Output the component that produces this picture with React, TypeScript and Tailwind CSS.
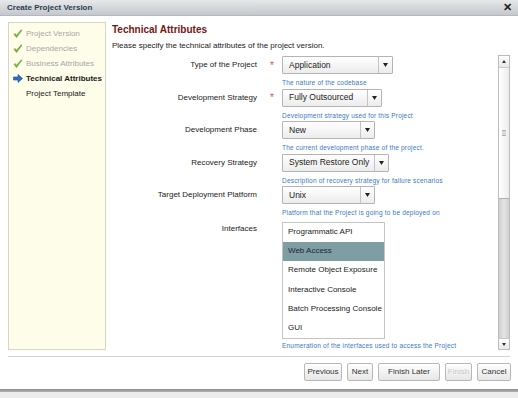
import React from "react";

const Check = () => (
    <svg width="10" height="10" viewBox="0 0 10 10" className="shrink-0">
        <path d="M1 5.5 L3.6 8.6 L9 1.2 L8.2 0.8 L3.5 6.2 L2 4.4 Z" fill="#7cb342" stroke="#5a9a2a" strokeWidth="0.5" />
    </svg>
);

const ArrowIcon = () => (
    <svg width="10" height="9" viewBox="0 0 10 9" className="shrink-0">
        <path d="M0.5 3 H5 V0.5 L9.5 4.5 L5 8.5 V6 H0.5 Z" fill="#2f6fc4" stroke="#1b4f96" strokeWidth="0.6" />
    </svg>
);

interface Step {
    label: string;
    state: "done" | "current" | "todo";
}

const steps: Step[] = [
    { label: "Project Version", state: "done" },
    { label: "Dependencies", state: "done" },
    { label: "Business Attributes", state: "done" },
    { label: "Technical Attributes", state: "current" },
    { label: "Project Template", state: "todo" },
];

interface Field {
    label: string;
    value: string;
    width: string;
    help: string;
    required?: boolean;
}

const fields: Field[] = [
    { label: "Type of the Project", value: "Application", width: "w-[111px]", help: "The nature of the codebase", required: true },
    { label: "Development Strategy", value: "Fully Outsourced", width: "w-[100px]", help: "Development strategy used for this Project", required: true },
    { label: "Development Phase", value: "New", width: "w-[93px]", help: "The current development phase of the project." },
    { label: "Recovery Strategy", value: "System Restore Only", width: "w-[107px]", help: "Description of recovery strategy for failure scenarios" },
    { label: "Target Deployment Platform", value: "Unix", width: "w-[93px]", help: "Platform that the Project is going to be deployed on" },
];

const interfaces = ["Programmatic API", "Web Access", "Remote Object Exposure", "Interactive Console", "Batch Processing Console", "GUI"];

const Select = ({ value, width }: { value: string; width: string }) => (
    <div className={`${width} h-[18px] flex border border-[#b4b4b4] bg-gradient-to-b from-white to-[#ececec] rounded-[1px]`}>
        <div className="flex-1 flex items-center pl-[6px] text-[8.5px] text-[#222] whitespace-nowrap">{value}</div>
        <div className="w-[14px] border-l border-[#c4c4c4] flex items-center justify-center">
            <svg width="5" height="4" viewBox="0 0 5 4"><path d="M0 0 H5 L2.5 4 Z" fill="#222" /></svg>
        </div>
    </div>
);

const Button = ({ label, width, disabled }: { label: string; width: string; disabled?: boolean }) => (
    <button className={`${width} h-[18px] px-0 border border-[#b8b8b8] rounded-[2px] bg-gradient-to-b from-white to-[#e6e6e6] text-[8px] whitespace-nowrap ${disabled ? "text-[#c8c8c8]" : "text-[#333]"}`}>
        {label}
    </button>
);

const Scrollbar = () => (
    <div className="w-[12px] shrink-0 flex flex-col border border-[#bcbcbc] bg-[#f2f2f2]">
        <div className="h-[12px] flex items-center justify-center border-b border-[#c8c8c8] bg-gradient-to-b from-white to-[#e8e8e8]">
            <svg width="4" height="3" viewBox="0 0 4 3"><path d="M0 3 H4 L2 0 Z" fill="#333" /></svg>
        </div>
        <div className="h-[131px] flex items-center justify-center border-b border-[#b0b0b0] bg-gradient-to-r from-white to-[#ececec]">
            <div className="w-[4px] h-[6px] border-y border-[#b0b0b0] bg-[#d8d8d8]" />
        </div>
        <div className="flex-1 bg-gradient-to-r from-[#cfcfcf] via-[#e4e4e4] to-[#cfcfcf]" />
        <div className="h-[11px] flex items-center justify-center border-t border-[#c8c8c8] bg-gradient-to-b from-white to-[#e8e8e8]">
            <svg width="4" height="3" viewBox="0 0 4 3"><path d="M0 0 H4 L2 3 Z" fill="#333" /></svg>
        </div>
    </div>
);

export default function App() {
    return (
        <div className="w-[518px] h-[398px] overflow-hidden bg-white flex flex-col font-['Liberation_Sans',Arial,sans-serif] text-[#222]">
            <div className="h-[16px] shrink-0 flex items-center justify-between pl-[7px] pr-[6px] bg-gradient-to-b from-[#e6e8ea] to-[#c4c8cc] border-b border-[#b4b8bc]">
                <span className="text-[8px] font-bold text-[#2d3d4d]">Create Project Version</span>
                <span className="text-[11px] font-bold text-[#222] leading-none">✕</span>
            </div>

            <div className="flex h-[334px] px-[8px] pt-[6px] shrink-0">
                <div className="w-[98px] shrink-0 border border-[#d6d6c4] bg-[#fdfde9] pt-[3px] pl-[4px]">
                    {steps.map((s) => (
                        <div key={s.label} className="h-[15px] flex items-center gap-[3px]">
                            <div className="w-[10px] flex justify-center">
                                {s.state === "done" && <Check />}
                                {s.state === "current" && <ArrowIcon />}
                            </div>
                            <span
                                className={`text-[8px] whitespace-nowrap ${s.state === "done" ? "text-[#a8a8a8]" : s.state === "current" ? "font-bold text-[#1a1a1a]" : "text-[#1a1a1a]"}`}
                            >
                                {s.label}
                            </span>
                        </div>
                    ))}
                </div>

                <div className="flex-1 flex flex-col ml-[6px] min-w-0">
                    <div className="text-[10px] font-bold text-[#7a1414] leading-[12px] mt-[2px]">Technical Attributes</div>
                    <div className="text-[8px] leading-[10px] mt-[5px]">Please specify the technical attributes of the project version.</div>
                    <div className="flex-1 flex mt-[4px] min-h-0">
                        <div className="flex-1 overflow-hidden pt-[1px]">
                            {fields.map((f) => (
                                <div key={f.label} className="flex h-[32.5px]">
                                    <div className="w-[145px] h-[18px] flex items-center justify-end text-[8px] text-[#222] whitespace-nowrap">{f.label}</div>
                                    <div className="w-[25px] h-[18px] flex items-center justify-end pr-[8px] text-[10px] text-[#e05060]">
                                        {f.required ? "*" : ""}
                                    </div>
                                    <div className="flex flex-col">
                                        <Select value={f.value} width={f.width} />
                                        <div className="mt-[5px] text-[6.5px] leading-[8px] tracking-[0.2px] text-[#3a78c8] whitespace-nowrap">{f.help}</div>
                                    </div>
                                </div>
                            ))}
                            <div className="flex mt-[3px]">
                                <div className="w-[145px] h-[14px] flex items-center justify-end text-[8px]">Interfaces</div>
                                <div className="w-[25px]" />
                                <div className="flex flex-col">
                                    <div className="w-[103px] h-[117px] border border-[#c4c4c4] flex flex-col overflow-hidden">
                                        {interfaces.map((i) => (
                                            <div
                                                key={i}
                                                className={`h-[19.2px] shrink-0 flex items-center pl-[5px] text-[8px] whitespace-nowrap ${i === "Web Access" ? "bg-[#7e9ea4] text-[#1a2a2e]" : "text-[#222]"}`}
                                            >
                                                {i}
                                            </div>
                                        ))}
                                    </div>
                                    <div className="mt-[3px] text-[6.5px] leading-[8px] tracking-[0.2px] text-[#3a78c8] whitespace-nowrap">
                                        Enumeration of the interfaces used to access the Project
                                    </div>
                                </div>
                            </div>
                        </div>
                        <Scrollbar />
                    </div>
                </div>
            </div>

            <div className="mx-[8px] mt-[6px] border-t border-[#d2d2d2]" />
            <div className="flex justify-end gap-[5px] pr-[7px] mt-[6px]">
                <Button label="Previous" width="w-[38px]" />
                <Button label="Next" width="w-[26px]" />
                <Button label="Finish Later" width="w-[62px]" />
                <Button label="Finish" width="w-[27px]" disabled />
                <Button label="Cancel" width="w-[34px]" />
            </div>
            <div className="mt-auto h-[9px] shrink-0 flex flex-col">
                <div className="h-[3px] bg-gradient-to-b from-[#8c8c8c] to-[#b4b4b4]" />
                <div className="flex-1 bg-[#ececec]" />
            </div>
        </div>
    );
}
